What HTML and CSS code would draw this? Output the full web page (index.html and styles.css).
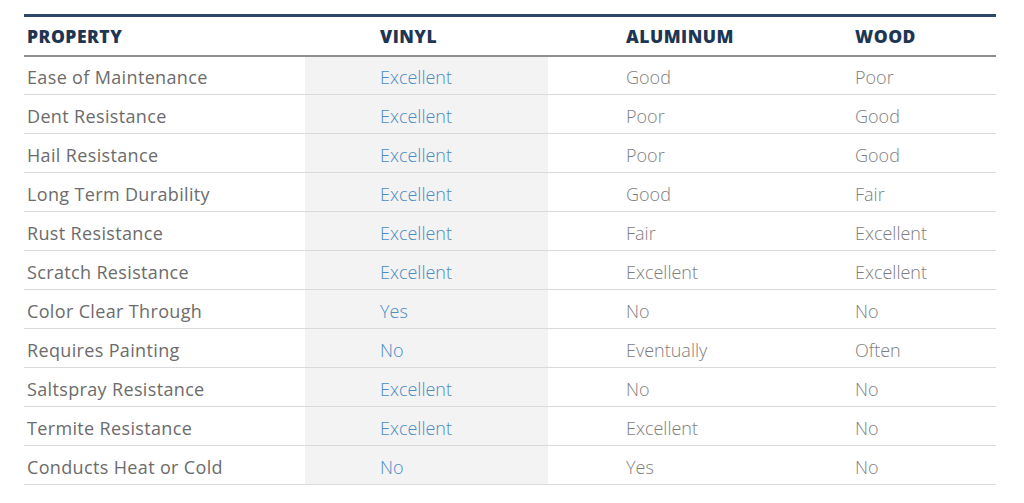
FILE: index.html
```html
<!DOCTYPE html>
<html>
<head>
<meta charset="utf-8">
<link rel="stylesheet" href="styles.css">
</head>
<body>
<div class="wrap">
<table class="cmp">
<thead>
<tr><th class="c1">PROPERTY</th><th class="c2">VINYL</th><th class="c3">ALUMINUM</th><th class="c4">WOOD</th></tr>
</thead>
<tbody>
<tr><td class="c1">Ease of Maintenance</td><td class="c2 vin">Excellent</td><td class="c3">Good</td><td class="c4">Poor</td></tr>
<tr><td class="c1">Dent Resistance</td><td class="c2 vin">Excellent</td><td class="c3">Poor</td><td class="c4">Good</td></tr>
<tr><td class="c1">Hail Resistance</td><td class="c2 vin">Excellent</td><td class="c3">Poor</td><td class="c4">Good</td></tr>
<tr><td class="c1">Long Term Durability</td><td class="c2 vin">Excellent</td><td class="c3">Good</td><td class="c4">Fair</td></tr>
<tr><td class="c1">Rust Resistance</td><td class="c2 vin">Excellent</td><td class="c3">Fair</td><td class="c4">Excellent</td></tr>
<tr><td class="c1">Scratch Resistance</td><td class="c2 vin">Excellent</td><td class="c3">Excellent</td><td class="c4">Excellent</td></tr>
<tr><td class="c1">Color Clear Through</td><td class="c2 vin">Yes</td><td class="c3">No</td><td class="c4">No</td></tr>
<tr><td class="c1">Requires Painting</td><td class="c2 vin">No</td><td class="c3">Eventually</td><td class="c4">Often</td></tr>
<tr><td class="c1">Saltspray Resistance</td><td class="c2 vin">Excellent</td><td class="c3">No</td><td class="c4">No</td></tr>
<tr><td class="c1">Termite Resistance</td><td class="c2 vin">Excellent</td><td class="c3">Excellent</td><td class="c4">No</td></tr>
<tr><td class="c1">Conducts Heat or Cold</td><td class="c2 vin">No</td><td class="c3">Yes</td><td class="c4">No</td></tr>
</tbody>
</table>
</div>
</body>
</html>
```
FILE: styles.css
```css
html, body {
  margin: 0;
  padding: 0;
  background: #ffffff;
}
.wrap {
  padding: 14px 0 0 24px;
}
.cmp {
  width: 972px;
  border-collapse: collapse;
  table-layout: fixed;
  font-family: "Open Sans", "Lato", sans-serif;
}
.cmp th, .cmp td {
  box-sizing: border-box;
  padding: 0;
  text-align: left;
}
.cmp thead tr {
  border-top: 3px solid #2b4868;
  border-bottom: 2px solid #8e8e8e;
}
.cmp th {
  height: 40px;
  font-size: 17.5px;
  font-weight: 800;
  letter-spacing: 0.5px;
  color: #1d3654;
}
.cmp td {
  height: 39px;
  padding-top: 3px !important;
  font-size: 18px;
  font-weight: 300;
  color: #7e7e7e;
  border-bottom: 1px solid #dadada;
}
.cmp td.c1 {
  font-weight: 500;
  letter-spacing: 0.35px;
  color: #6c6c6c;
}
.c1 { width: 281px; padding-left: 3px !important; }
.c2 { width: 243px; padding-left: 75px !important; }
.c3 { width: 230px; padding-left: 78px !important; }
.c4 { padding-left: 77px !important; }
.cmp td.vin {
  background: #f3f3f3;
  color: #4a8cc4;
}
```
